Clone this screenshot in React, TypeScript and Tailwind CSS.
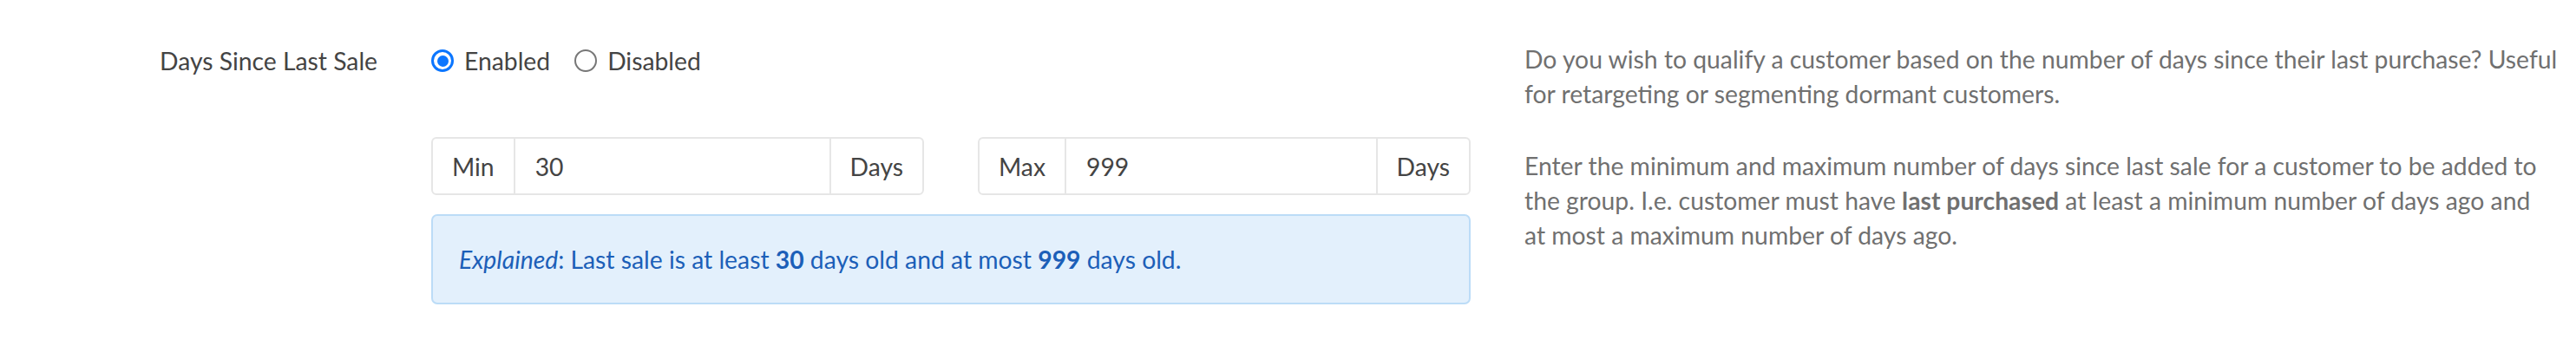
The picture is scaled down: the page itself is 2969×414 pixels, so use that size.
import { useState } from 'react';

type RangeFieldProps = {
  prefix: string;
  value: string;
  suffix: string;
  onChange: (v: string) => void;
};

function RangeField({ prefix, value, suffix, onChange }: RangeFieldProps) {
  return (
    <div className="flex h-[67px] min-w-0 flex-1 items-stretch rounded-[6px] border-2 border-[#e6e6e6] bg-white">
      <span className="flex items-center border-r-2 border-[#e6e6e6] px-[22px] text-[#444]">{prefix}</span>
      <input
        value={value}
        onChange={(e) => onChange(e.target.value)}
        className="w-0 min-w-0 flex-1 bg-transparent px-[23px] text-[#444] outline-none"
      />
      <span className="flex items-center border-l-2 border-[#e6e6e6] px-[22px] text-[#444]">{suffix}</span>
    </div>
  );
}

function Radio({ checked, label, onClick }: { checked: boolean; label: string; onClick: () => void }) {
  return (
    <button type="button" onClick={onClick} className="flex items-center gap-[12px] text-[#444]">
      {checked ? (
        <span className="flex h-[26px] w-[26px] items-center justify-center rounded-full border-[3px] border-[#0b76ff] bg-white">
          <span className="h-[13px] w-[13px] rounded-full bg-[#0b76ff]" />
        </span>
      ) : (
        <span className="h-[26px] w-[26px] rounded-full border-2 border-[#777] bg-white" />
      )}
      {label}
    </button>
  );
}

export default function App() {
  const [enabled, setEnabled] = useState(true);
  const [min, setMin] = useState('30');
  const [max, setMax] = useState('999');

  return (
    <div className="min-h-[414px] bg-white font-['Lato',sans-serif] text-[28.3px] leading-[40px]">
      <div className="flex pl-[184px] pt-[50px]">
        <div className="w-[313px] shrink-0 text-[#444]">Days Since Last Sale</div>

        <div className="w-[1198px] shrink-0">
          <div className="flex items-center gap-[28px]">
            <Radio checked={enabled} label="Enabled" onClick={() => setEnabled(true)} />
            <Radio checked={!enabled} label="Disabled" onClick={() => setEnabled(false)} />
          </div>

          <div className="mt-[68px] flex gap-[62px]">
            <RangeField prefix="Min" value={min} suffix="Days" onChange={setMin} />
            <RangeField prefix="Max" value={max} suffix="Days" onChange={setMax} />
          </div>

          <div className="mt-[22px] rounded-[7px] border-2 border-[#bcdcf7] bg-[#e3f0fc] px-[30px] py-[30px] text-[#1c5fb8]">
            <em>Explained</em>: Last sale is at least <strong>{min}</strong> days old and at most{' '}
            <strong>{max}</strong> days old.
          </div>
        </div>

        <div className="ml-[62px] w-[1202px] shrink-0 text-[#707070]">
          <p className="-mt-[2px]">
            Do you wish to qualify a customer based on the number of days since their last purchase? Useful for
            retargeting or segmenting dormant customers.
          </p>
          <p className="mt-[43px] max-w-[1178px]">
            Enter the minimum and maximum number of days since last sale for a customer to be added to the group.
            I.e. customer must have <strong className="font-bold">last purchased</strong> at least a minimum number
            of days ago and at most a maximum number of days ago.
          </p>
        </div>
      </div>
    </div>
  );
}
